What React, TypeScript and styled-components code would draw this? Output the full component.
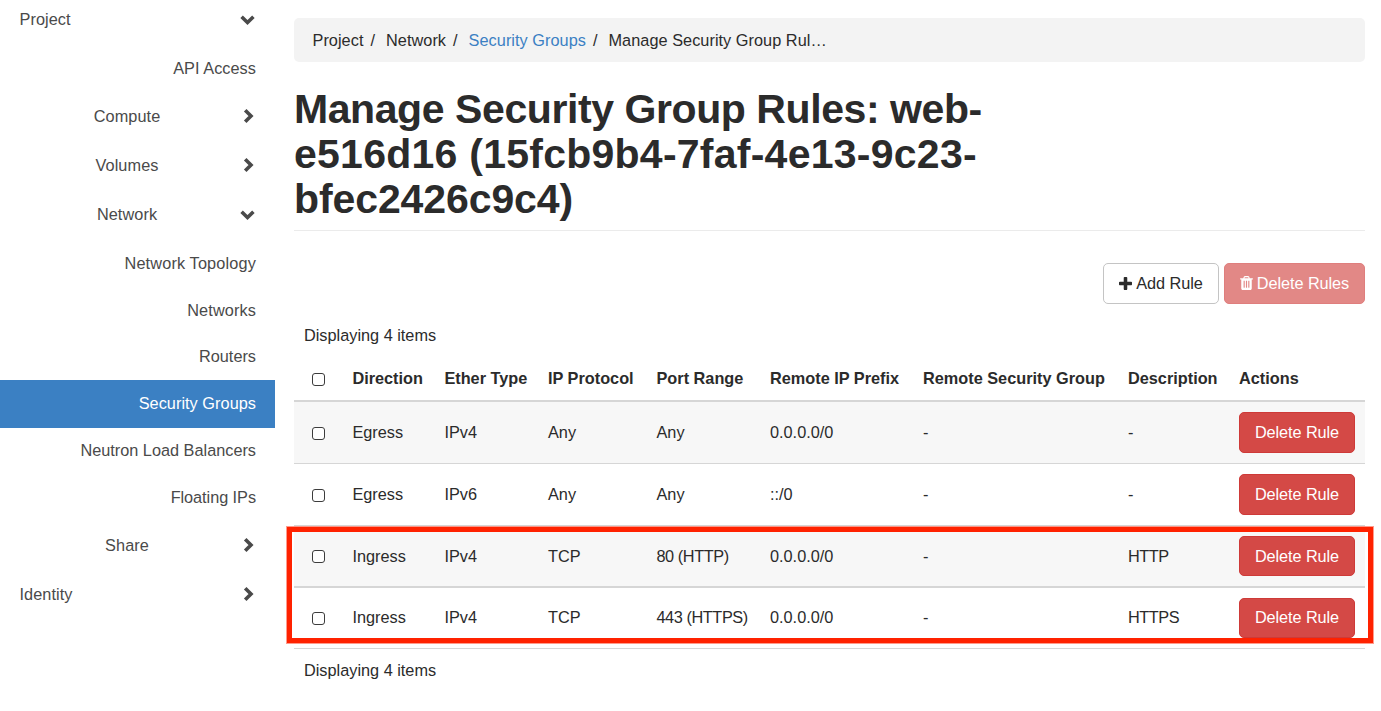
import React from "react";
import styled, { createGlobalStyle, css } from "styled-components";

const GlobalStyle = createGlobalStyle`
  *, *::before, *::after { box-sizing: border-box; }
  body {
    margin: 0;
    background: #fff;
    color: #2b2b2b;
    font-family: "Liberation Sans", Arial, sans-serif;
    font-size: 16.3px;
    line-height: 23px;
    overflow: hidden;
  }
`;

const Page = styled.div`
  display: flex;
  align-items: flex-start;
  width: 1381px;
  height: 711px;
`;

const Sidebar = styled.nav`
  width: 275px;
  flex: none;
  color: #4a4a4a;
`;

const GroupRow = styled.div<{ $height: number; $gap?: number }>`
  display: flex;
  align-items: center;
  justify-content: space-between;
  height: ${(p) => p.$height}px;
  margin-bottom: ${(p) => p.$gap ?? 0}px;
  padding: 0 19px 0 19.5px;
  letter-spacing: 0.07px;
`;

const SubGroupLabel = styled.span`
  width: 215px;
  text-align: center;
`;

const NavLink = styled.a<{ $height: number; $active?: boolean; $tracking?: number }>`
  display: flex;
  align-items: center;
  justify-content: flex-end;
  height: ${(p) => p.$height}px;
  padding-right: 19px;
  letter-spacing: ${(p) => p.$tracking ?? 0}px;
  ${(p) =>
    p.$active &&
    css`
      padding-bottom: 2px;
      background: #3b80c3;
      color: #fff;
    `}
`;

const ChevronIcon = styled.svg`
  width: 16px;
  height: 16px;
  flex: none;
  fill: none;
  stroke: currentColor;
  stroke-width: 3.6;
`;

const Main = styled.main`
  width: 1071px;
  margin: 18px 0 0 19px;
`;

const Breadcrumb = styled.ol`
  display: flex;
  align-items: center;
  height: 44px;
  margin: 0;
  padding: 0 18.5px;
  list-style: none;
  background: #f3f3f3;
  border-radius: 5px;
  letter-spacing: 0.04px;

  li + li::before {
    content: "/";
    padding: 0 11px 0 7px;
    color: #2b2b2b;
  }
`;

const Crumb = styled.li<{ $link?: boolean }>`
  color: ${(p) => (p.$link ? "#3b80c3" : "inherit")};
`;

const Title = styled.h1`
  margin: 25px 0 0;
  padding-bottom: 8px;
  height: 144px;
  border-bottom: 1px solid #ebebeb;
  font-size: 41px;
  line-height: 45px;
  font-weight: 700;
`;

const TitleLine = styled.span<{ $tracking: number }>`
  display: block;
  letter-spacing: ${(p) => p.$tracking}px;
`;

const Toolbar = styled.div`
  display: flex;
  justify-content: flex-end;
  gap: 5px;
  margin-top: 32px;
`;

const Button = styled.button<{ $danger?: boolean; $width: number; $height?: number }>`
  display: inline-flex;
  align-items: center;
  justify-content: center;
  gap: 4px;
  width: ${(p) => p.$width}px;
  height: ${(p) => p.$height ?? 41}px;
  padding: 0;
  border: 1px solid ${(p) => (p.$danger ? "#ce3a38" : "#c4c4c4")};
  border-radius: 5px;
  background: ${(p) => (p.$danger ? "#d44946" : "#fff")};
  color: ${(p) => (p.$danger ? "#fff" : "#2b2b2b")};
  font: inherit;
  letter-spacing: -0.08px;
  white-space: nowrap;
  &:disabled { opacity: 0.65; }
`;

const ButtonIcon = styled.svg<{ $width: number; $height: number }>`
  width: ${(p) => p.$width}px;
  height: ${(p) => p.$height}px;
  margin-bottom: 1px;
  fill: currentColor;
`;

const Caption = styled.div<{ $top: number }>`
  margin-top: ${(p) => p.$top}px;
  padding-left: 10px;
`;

const RuleTable = styled.div`
  position: relative;
  margin-top: 9px;
`;

const columns = "58.4px 92px 103.6px 108.5px 113.5px 153px 205px 111px 1fr";

const Row = styled.div<{ $height: number; $line: number; $striped?: boolean; $head?: boolean }>`
  display: grid;
  grid-template-columns: ${columns};
  align-items: center;
  height: ${(p) => p.$height}px;
  border-bottom: ${(p) => p.$line}px solid #d6d6d6;
  background: ${(p) => (p.$striped ? "#f7f7f7" : "transparent")};
  font-weight: ${(p) => (p.$head ? 700 : 400)};
  white-space: nowrap;
`;

const Cell = styled.span<{ $lift?: number; $tracking?: number }>`
  padding-bottom: ${(p) => p.$lift ?? 0}px;
  letter-spacing: ${(p) => p.$tracking ?? 0}px;
`;

const ButtonLabel = styled.span<{ $lift: number }>`
  padding-bottom: ${(p) => p.$lift}px;
`;

const Checkbox = styled.input<{ $top?: number }>`
  appearance: none;
  width: 13px;
  height: 13px;
  margin: ${(p) => p.$top ?? 2}px 0 0 17.6px;
  border: 1px solid #3c3c3c;
  border-radius: 3px;
  background: #fff;
`;

const Highlight = styled.div`
  position: absolute;
  top: 171px;
  left: -7px;
  width: 1086px;
  height: 116px;
  border: 5px solid #ff2200;
  box-shadow: 0 0 0 1px rgba(255, 34, 0, 0.45);
  pointer-events: none;
`;

function Chevron({ open }: { open?: boolean }) {
  return (
    <ChevronIcon viewBox="0 0 16 16">
      <path d={open ? "M1.6 5.8 L7.5 11.5 L13.4 5.8" : "M5.2 2.2 L11 8 L5.2 13.8"} />
    </ChevronIcon>
  );
}

function Plus() {
  return (
    <ButtonIcon $width={13} $height={13} viewBox="192 128 1408 1408">
      <path d="M1600 736v192q0 40-28 68t-68 28h-416v416q0 40-28 68t-68 28h-192q-40 0-68-28t-28-68v-416h-416q-40 0-68-28t-28-68v-192q0-40 28-68t68-28h416v-416q0-40 28-68t68-28h192q40 0 68 28t28 68v416h416q40 0 68 28t28 68z" />
    </ButtonIcon>
  );
}

function Trash() {
  return (
    <ButtonIcon $width={13} $height={14} viewBox="192 128 1408 1536">
      <path d="M704 1376v-704q0-14-9-23t-23-9h-64q-14 0-23 9t-9 23v704q0 14 9 23t23 9h64q14 0 23-9t9-23zm256 0v-704q0-14-9-23t-23-9h-64q-14 0-23 9t-9 23v704q0 14 9 23t23 9h64q14 0 23-9t9-23zm256 0v-704q0-14-9-23t-23-9h-64q-14 0-23 9t-9 23v704q0 14 9 23t23 9h64q14 0 23-9t9-23zm-544-992h448l-48-117q-7-9-17-11h-317q-10 2-17 11zm928 32v64q0 14-9 23t-23 9h-96v948q0 83-47 143.5t-113 60.5h-832q-66 0-113-58.5t-47-141.5v-952h-96q-14 0-23-9t-9-23v-64q0-14 9-23t23-9h309l70-167q15-37 54-63t79-26h320q40 0 79 26t54 63l70 167h309q14 0 23 9t9 23z" />
    </ButtonIcon>
  );
}

const headings = [
  "Direction",
  "Ether Type",
  "IP Protocol",
  "Port Range",
  "Remote IP Prefix",
  "Remote Security Group",
  "Description",
  "Actions",
];

const rules = [
  { height: 62, line: 1, button: 41, check: 2, lift: 0, cells: ["Egress", "IPv4", "Any", "Any", "0.0.0.0/0", "-", "-"] },
  { height: 62, line: 1, button: 41, check: 2, lift: 0, cells: ["Egress", "IPv6", "Any", "Any", "::/0", "-", "-"] },
  { height: 62, line: 2, button: 40, check: 1, lift: 0, cells: ["Ingress", "IPv4", "TCP", "80 (HTTP)", "0.0.0.0/0", "-", "HTTP"] },
  { height: 61, line: 1, button: 40, check: 1, lift: 2, cells: ["Ingress", "IPv4", "TCP", "443 (HTTPS)", "0.0.0.0/0", "-", "HTTPS"] },
];

function SubGroup({ name, height, open }: { name: string; height: number; open?: boolean }) {
  return (
    <GroupRow $height={height}>
      <SubGroupLabel>{name}</SubGroupLabel>
      <Chevron open={open} />
    </GroupRow>
  );
}

export default function App() {
  return (
    <>
      <GlobalStyle />
      <Page>
        <Sidebar>
          <GroupRow $height={38} $gap={6}>
            Project
            <Chevron open />
          </GroupRow>
          <NavLink $height={49} $tracking={0.05}>API Access</NavLink>
          <SubGroup name="Compute" height={46} />
          <SubGroup name="Volumes" height={52} />
          <SubGroup name="Network" height={46} open />
          <NavLink $height={52} $tracking={0.15}>Network Topology</NavLink>
          <NavLink $height={43} $tracking={0.12}>Networks</NavLink>
          <NavLink $height={48}>Routers</NavLink>
          <NavLink $height={48} $active $tracking={0.04}>Security Groups</NavLink>
          <NavLink $height={44}>Neutron Load Balancers</NavLink>
          <NavLink $height={50} $tracking={-0.05}>Floating IPs</NavLink>
          <SubGroup name="Share" height={46} />
          <GroupRow $height={52}>
            Identity
            <Chevron />
          </GroupRow>
        </Sidebar>
        <Main>
          <Breadcrumb>
            <Crumb>Project</Crumb>
            <Crumb>Network</Crumb>
            <Crumb $link>Security Groups</Crumb>
            <Crumb>Manage Security Group Rul…</Crumb>
          </Breadcrumb>
          <Title>
            <TitleLine $tracking={-0.42}>Manage Security Group Rules: web-</TitleLine>
            <TitleLine $tracking={0.25}>e516d16 (15fcb9b4-7faf-4e13-9c23-</TitleLine>
            <TitleLine $tracking={-0.1}>bfec2426c9c4)</TitleLine>
          </Title>
          <Toolbar>
            <Button $width={116}>
              <Plus />
              Add Rule
            </Button>
            <Button $width={141} $danger disabled>
              <Trash />
              Delete Rules
            </Button>
          </Toolbar>
          <Caption $top={20}>Displaying 4 items</Caption>
          <RuleTable>
            <Row $height={46} $line={2} $head>
              <Checkbox type="checkbox" />
              {headings.map((h) => (
                <Cell key={h}>{h}</Cell>
              ))}
            </Row>
            {rules.map((rule, i) => (
              <Row key={i} $height={rule.height} $line={rule.line} $striped={i % 2 === 0}>
                <Checkbox type="checkbox" $top={rule.check} />
                {rule.cells.map((cell, j) => (
                  <Cell key={j} $lift={rule.lift} $tracking={cell.includes("HTTP") ? -0.42 : 0}>
                    {cell}
                  </Cell>
                ))}
                <Button $width={116} $height={rule.button} $danger>
                  <ButtonLabel $lift={rule.lift}>Delete Rule</ButtonLabel>
                </Button>
              </Row>
            ))}
            <Highlight />
          </RuleTable>
          <Caption $top={10}>Displaying 4 items</Caption>
        </Main>
      </Page>
    </>
  );
}
